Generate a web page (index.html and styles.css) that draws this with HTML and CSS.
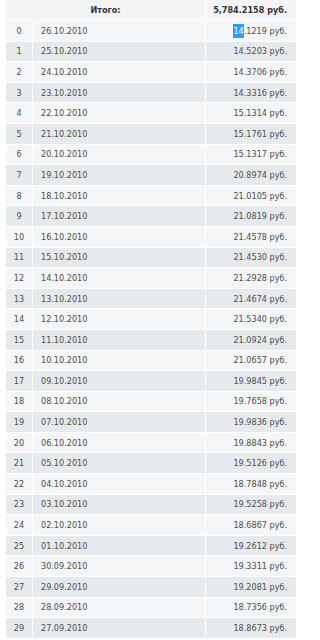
FILE: index.html
```html
<!DOCTYPE html>
<html lang="ru">
<head>
<meta charset="utf-8">
<link rel="stylesheet" href="styles.css">
</head>
<body>
<table class="rates">
<thead>
<tr class="total"><th colspan="2" class="total-label">Итого:</th><th class="sum">5,784.2158 руб.</th></tr>
</thead>
<tbody>
<tr><td class="n">0</td><td class="d">26.10.2010</td><td class="v"><span class="sel">14</span>.1219 руб.</td></tr>
<tr><td class="n">1</td><td class="d">25.10.2010</td><td class="v">14.5203 руб.</td></tr>
<tr><td class="n">2</td><td class="d">24.10.2010</td><td class="v">14.3706 руб.</td></tr>
<tr><td class="n">3</td><td class="d">23.10.2010</td><td class="v">14.3316 руб.</td></tr>
<tr><td class="n">4</td><td class="d">22.10.2010</td><td class="v">15.1314 руб.</td></tr>
<tr><td class="n">5</td><td class="d">21.10.2010</td><td class="v">15.1761 руб.</td></tr>
<tr><td class="n">6</td><td class="d">20.10.2010</td><td class="v">15.1317 руб.</td></tr>
<tr><td class="n">7</td><td class="d">19.10.2010</td><td class="v">20.8974 руб.</td></tr>
<tr><td class="n">8</td><td class="d">18.10.2010</td><td class="v">21.0105 руб.</td></tr>
<tr><td class="n">9</td><td class="d">17.10.2010</td><td class="v">21.0819 руб.</td></tr>
<tr><td class="n">10</td><td class="d">16.10.2010</td><td class="v">21.4578 руб.</td></tr>
<tr><td class="n">11</td><td class="d">15.10.2010</td><td class="v">21.4530 руб.</td></tr>
<tr><td class="n">12</td><td class="d">14.10.2010</td><td class="v">21.2928 руб.</td></tr>
<tr><td class="n">13</td><td class="d">13.10.2010</td><td class="v">21.4674 руб.</td></tr>
<tr><td class="n">14</td><td class="d">12.10.2010</td><td class="v">21.5340 руб.</td></tr>
<tr><td class="n">15</td><td class="d">11.10.2010</td><td class="v">21.0924 руб.</td></tr>
<tr><td class="n">16</td><td class="d">10.10.2010</td><td class="v">21.0657 руб.</td></tr>
<tr><td class="n">17</td><td class="d">09.10.2010</td><td class="v">19.9845 руб.</td></tr>
<tr><td class="n">18</td><td class="d">08.10.2010</td><td class="v">19.7658 руб.</td></tr>
<tr><td class="n">19</td><td class="d">07.10.2010</td><td class="v">19.9836 руб.</td></tr>
<tr><td class="n">20</td><td class="d">06.10.2010</td><td class="v">19.8843 руб.</td></tr>
<tr><td class="n">21</td><td class="d">05.10.2010</td><td class="v">19.5126 руб.</td></tr>
<tr><td class="n">22</td><td class="d">04.10.2010</td><td class="v">18.7848 руб.</td></tr>
<tr><td class="n">23</td><td class="d">03.10.2010</td><td class="v">19.5258 руб.</td></tr>
<tr><td class="n">24</td><td class="d">02.10.2010</td><td class="v">18.6867 руб.</td></tr>
<tr><td class="n">25</td><td class="d">01.10.2010</td><td class="v">19.2612 руб.</td></tr>
<tr><td class="n">26</td><td class="d">30.09.2010</td><td class="v">19.3311 руб.</td></tr>
<tr><td class="n">27</td><td class="d">29.09.2010</td><td class="v">19.2081 руб.</td></tr>
<tr><td class="n">28</td><td class="d">28.09.2010</td><td class="v">18.7356 руб.</td></tr>
<tr><td class="n">29</td><td class="d">27.09.2010</td><td class="v">18.8673 руб.</td></tr>
</tbody>
</table>
</body>
</html>
```
FILE: styles.css
```css
html, body {
  margin: 0;
  padding: 0;
  background: #ffffff;
}
body {
  padding: 0 0 0 6px;
  font-family: "DejaVu Sans Condensed", "DejaVu Sans", sans-serif;
  font-stretch: condensed;
  font-size: 9px;
  color: #4d4d4d;
}
.rates {
  border-collapse: collapse;
  width: 291px;
}
.rates th, .rates td {
  border: 1px solid #ffffff;
  padding: 0;
  height: 19.6px;
  white-space: nowrap;
  vertical-align: middle;
}
.rates tr > :first-child {
  border-left: 0;
}
.rates thead th {
  border-top: 0;
  height: 20px;
}
.rates .total th {
  background: #f3f5f7;
  color: #333333;
  font-weight: bold;
}
.rates .total-label {
  text-align: center;
}
.rates .sum {
  text-align: right;
  padding-right: 9px;
}
.rates tbody tr:nth-child(odd) td {
  background: #f4f6f8;
}
.rates tbody tr:nth-child(even) td {
  background: #e7eaed;
}
.rates .n {
  width: 26px;
  text-align: center;
}
.rates .d {
  text-align: left;
  padding-left: 8px;
}
.rates .v {
  width: 81px;
  text-align: right;
  padding-right: 9px;
}
.rates .sel {
  background: #3399ff;
  color: #ffffff;
  padding: 2px 0;
}
```
